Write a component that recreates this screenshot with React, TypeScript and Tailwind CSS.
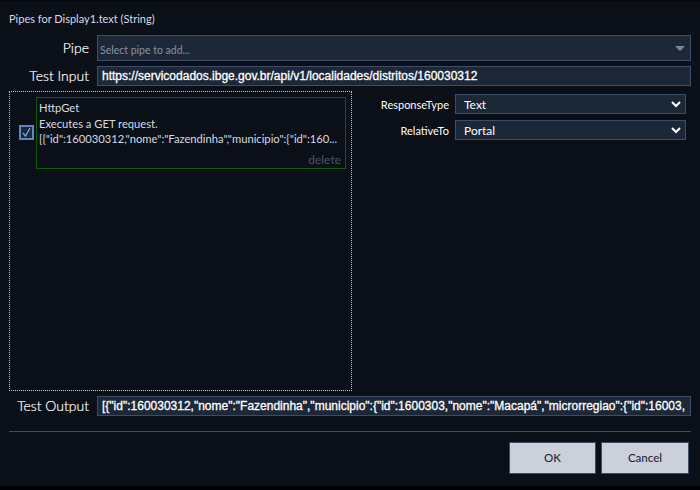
import React from "react";

const ui = "font-['Lato','Open_Sans',sans-serif]";
const mono = "font-['Liberation_Sans',Arial,sans-serif]";

function FieldLabel({ children }: { children: React.ReactNode }) {
  return (
    <div className={`w-[88px] shrink-0 pr-[8px] text-right text-[14px] font-light leading-[20px] text-white whitespace-nowrap [-webkit-text-stroke:0.2px_#ffffff] ${ui}`}>
      {children}
    </div>
  );
}

function TextBox({ value }: { value: string }) {
  return (
    <div className={`h-[20px] flex-1 min-w-0 overflow-hidden whitespace-nowrap border border-[#3d4c6b] bg-[#1c2738] pl-[4px] text-[12px] leading-[18px] text-white [-webkit-text-stroke:0.3px_#ffffff] ${mono}`}>
      {value}
    </div>
  );
}

function PropSelect({ label, value }: { label: string; value: string }) {
  return (
    <div className="flex items-center">
      <div className={`w-[96px] pr-[6px] pt-[1px] text-right text-[11px] leading-[19px] text-white ${ui}`}>{label}</div>
      <div className="flex h-[20px] w-[231px] items-center justify-between border border-[#3d4c6b] bg-[#1c2738] pl-[8px] pr-[4px]">
        <span className={`pt-[1px] text-[12px] leading-[17px] text-white ${ui}`}>{value}</span>
        <svg width="10" height="7" viewBox="0 0 10 7" fill="none" stroke="#ffffff" strokeWidth="2">
          <path d="M1 1l4 4 4-4" />
        </svg>
      </div>
    </div>
  );
}

export default function App() {
  return (
    <div className={`flex h-[490px] w-[700px] flex-col overflow-hidden bg-[#0a0f18] border-t border-[#05080d] border-b-[4px] border-b-black px-[9px] ${ui}`}>
      <div className="h-[34px] pt-[10px] text-[11px] leading-[15px] text-[#d8dce4]">Pipes for Display1.text (String)</div>

      <div className="flex flex-col gap-[5px]">
        <div className="flex items-center">
          <FieldLabel>Pipe</FieldLabel>
          <div className="flex h-[26px] flex-1 items-center justify-between border border-[#3d4c6b] bg-[#1c2738] pl-[2px] pr-[5px]">
            <span className="pt-[3px] text-[10.5px] leading-[14px] text-[#8a93a3]">Select pipe to add...</span>
            <span className="h-0 w-0 border-x-[5px] border-t-[5px] border-x-transparent border-t-[#7f8794]" />
          </div>
        </div>
        <div className="flex items-center">
          <FieldLabel>Test Input</FieldLabel>
          <TextBox value="https://servicodados.ibge.gov.br/api/v1/localidades/distritos/160030312" />
        </div>
      </div>

      <div className="mt-[5px] flex">
        <div className="h-[300px] w-[343px] shrink-0 border border-dotted border-[#c4c8d0] px-[26px] pt-[5px]">
          <div className="relative h-[72px] w-[310px] border border-[#0c5c0c] px-[2px] pt-[2px] text-[11.2px] leading-[15.5px] text-[#d8dce4]">
            <div>HttpGet</div>
            <div>Executes a GET request.</div>
            <div className="whitespace-nowrap">{'[{"id":160030312,"nome":"Fazendinha","municipio":{"id":160...'}</div>
            <div className="absolute bottom-[1px] right-[4px] text-[12px] text-[#4e5468]">delete</div>
            <div className="absolute left-[-18px] top-[27px] flex h-[15px] w-[15px] items-center justify-center bg-[#5f86bb]">
              <div className="flex h-[11px] w-[11px] items-center justify-center bg-[#1c2738]">
                <svg width="11" height="11" viewBox="0 0 11 11" fill="none" stroke="#7aa6df" strokeWidth="1.3">
                  <path d="M2 6l2.5 3L9 1" />
                </svg>
              </div>
            </div>
          </div>
        </div>
        <div className="flex flex-1 flex-col gap-[6px] pt-[3px] pl-[7px]">
          <PropSelect label="ResponseType" value="Text" />
          <PropSelect label="RelativeTo" value="Portal" />
        </div>
      </div>

      <div className="mt-[5px] flex items-center">
        <FieldLabel>Test Output</FieldLabel>
        <TextBox value={'[{"id":160030312,"nome":"Fazendinha","municipio":{"id":1600303,"nome":"Macapá","microrregiao":{"id":16003,'} />
      </div>

      <div className="mt-[15px] h-px bg-[#3d4c6b]" />

      <div className="mt-[10px] flex justify-end gap-[5px] pr-[2px]">
        <button className="h-[32px] w-[87px] border border-[#3d4c6b] bg-[#ccd0da] text-[11.5px] font-medium text-[#1c2738]">OK</button>
        <button className="h-[32px] w-[88px] border border-[#3d4c6b] bg-[#ccd0da] text-[11.5px] font-medium text-[#1c2738]">Cancel</button>
      </div>
    </div>
  );
}
